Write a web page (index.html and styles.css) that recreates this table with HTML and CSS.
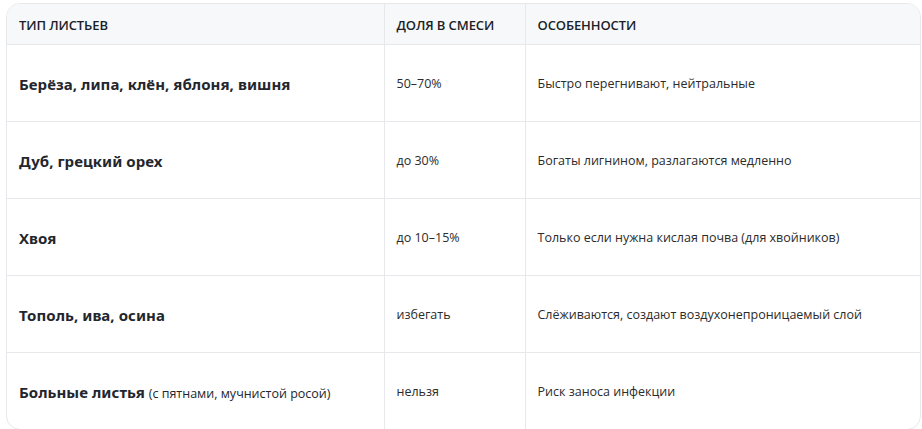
FILE: index.html
```html
<!DOCTYPE html>
<html lang="ru">
<head>
<meta charset="utf-8">
<link rel="stylesheet" href="styles.css">
</head>
<body>
<div class="card">
<table class="tbl">
<colgroup><col class="c1"><col class="c2"><col class="c3"></colgroup>
<thead>
<tr><th>ТИП ЛИСТЬЕВ</th><th>ДОЛЯ В СМЕСИ</th><th>ОСОБЕННОСТИ</th></tr>
</thead>
<tbody>
<tr><td class="name">Берёза, липа, клён, яблоня, вишня</td><td>50–70%</td><td>Быстро перегнивают, нейтральные</td></tr>
<tr><td class="name">Дуб, грецкий орех</td><td>до 30%</td><td>Богаты лигнином, разлагаются медленно</td></tr>
<tr><td class="name">Хвоя</td><td>до 10–15%</td><td>Только если нужна кислая почва (для хвойников)</td></tr>
<tr><td class="name">Тополь, ива, осина</td><td>избегать</td><td>Слёживаются, создают воздухонепроницаемый слой</td></tr>
<tr><td class="name">Больные листья <span class="note">(с пятнами, мучнистой росой)</span></td><td>нельзя</td><td>Риск заноса инфекции</td></tr>
</tbody>
</table>
</div>
</body>
</html>
```
FILE: styles.css
```css
html, body { margin: 0; padding: 0; background: #ffffff; }
body { padding: 3px 1px 0 6px; font-family: "Open Sans", "Noto Sans", sans-serif; color: #262626; }
.card {
  width: 913px;
  border: 1px solid #e6e8ec;
  border-radius: 14px;
  overflow: hidden;
}
.tbl { width: 100%; border-collapse: collapse; table-layout: fixed; }
.c1 { width: 377px; }
.c2 { width: 141px; }
.c3 { width: auto; }
.tbl th {
  height: 39px;
  background: #f7f8fa;
  text-align: left;
  font-size: 13px;
  font-weight: 600;
  color: #1b1f29;
  padding: 1px 12px 0;
  border-bottom: 1px solid #e6e8ec;
  letter-spacing: -0.1px;
}
.tbl td {
  height: 75px;
  padding: 1px 12px 0;
  font-size: 12.5px;
  color: #2b2b2b;
  border-top: 1px solid #e6e8ec;
}
.tbl th + th, .tbl td + td { border-left: 1px solid #e6e8ec; }
.tbl tbody tr:first-child td { border-top: none; }
.tbl td.name {
  font-family: "Noto Sans", "Open Sans", sans-serif;
  font-weight: 700;
  font-size: 15px;
  color: #23262d;
  letter-spacing: 0.05px;
}
.note { font-weight: 400; font-size: 12.5px; font-family: "Open Sans", sans-serif; letter-spacing: 0; }
```
